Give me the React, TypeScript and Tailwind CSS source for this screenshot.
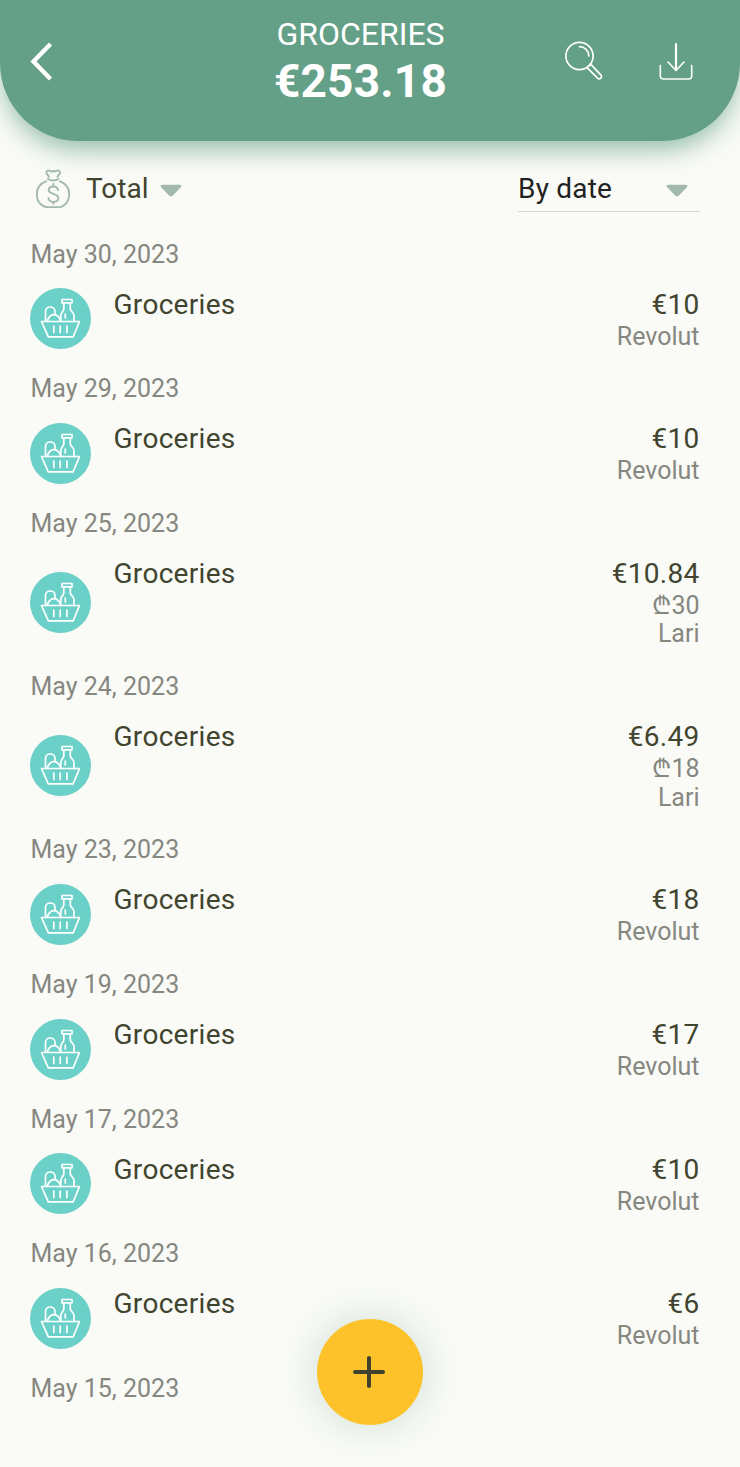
type Expense = {
  date: string;
  amount?: string;
  original?: string;
  account?: string;
};

const expenses: Expense[] = [
  { date: "May 30, 2023", amount: "€10", account: "Revolut" },
  { date: "May 29, 2023", amount: "€10", account: "Revolut" },
  { date: "May 25, 2023", amount: "€10.84", original: "₾30", account: "Lari" },
  { date: "May 24, 2023", amount: "€6.49", original: "₾18", account: "Lari" },
  { date: "May 23, 2023", amount: "€18", account: "Revolut" },
  { date: "May 19, 2023", amount: "€17", account: "Revolut" },
  { date: "May 17, 2023", amount: "€10", account: "Revolut" },
  { date: "May 16, 2023", amount: "€6", account: "Revolut" },
  { date: "May 15, 2023" },
];

const BackIcon = () => (
  <svg className="h-10 w-6" viewBox="0 0 24 40" fill="none" stroke="currentColor" strokeWidth="4.4">
    <path d="M20.5 3 3.5 20.5 20.5 38" />
  </svg>
);

const SearchIcon = () => (
  <svg className="size-10" viewBox="0 0 40 40" fill="none" stroke="currentColor" strokeWidth="1.7" strokeLinejoin="round" strokeLinecap="round">
    <circle cx="15.5" cy="15" r="13.6" />
    <path d="M15.5 5.7a9.3 9.3 0 0 1 9.3 9.3" />
    <path d="M23 26.7 33.6 37.1c1 1 2.2 1 3.2 0s1-2.200 0-3.200L26.600 23.100M23 26.700l3.600-3.600" />
  </svg>
);

const DownloadIcon = () => (
  <svg className="h-10 w-9" viewBox="0 0 36 40" fill="none" stroke="currentColor" strokeWidth="1.6" strokeLinecap="round" strokeLinejoin="round">
    <path d="M18 3v26" strokeWidth="2.2" />
    <path d="M10 21 18 29.500l8-8.500" />
    <path d="M2.300 24.500v10.500a3 3 0 0 0 3 3h25.400a3 3 0 0 0 3-3V24.500" />
  </svg>
);

const MoneyBagIcon = () => (
  <svg className="h-10 w-9 text-[#a3b9b0]" viewBox="0 0 36 40" fill="none" stroke="currentColor" strokeWidth="1.9" strokeLinecap="round" strokeLinejoin="round">
    <path d="M13.9 7.6 11.8 4.6c-1.3-2.200.9-4.100 3.100-2.700 1.200.8 2 .8 3.300 0 1.300.8 2.100.8 3.300 0 2.200-1.400 4.400.5 3.100 2.700l-2.100 3" />
    <path d="M12.900 9.800c3.200 2.100 7.400 2.100 10.600 0" />
    <path d="M11.3 12.200C5.500 14.500 1.800 19.300 1.800 25.200c0 5.200 2.700 9.800 6.600 12 1.200.7 2.200.9 3.600.9h12c1.400 0 2.400-.2 3.600-.9 3.900-2.200 6.600-6.800 6.600-12 0-5.900-3.700-10.700-9.500-13" />
    <path d="M23 21c-.4-2.300-2.200-3.500-4.600-3.500-2.700 0-4.700 1.400-4.700 3.600 0 5 9.600 2.700 9.600 8 0 2.300-2 3.800-4.900 3.800-2.700 0-4.700-1.400-5-3.900M18.400 14.700v2.800M18.400 32.900v1.800" />
  </svg>
);

const CaretIcon = () => (
  <svg className="h-3.5 w-[22px] text-[#a3b9b0]" viewBox="0 0 22 14" fill="currentColor">
    <path d="M2.200.7h17.600c1.600 0 2.200 1.500 1.100 2.500l-8.300 8.600c-.9.900-2.300.9-3.200 0L1.100 3.200C0 2.200.6.700 2.200.7Z" />
  </svg>
);

const BasketIcon = () => (
  <svg className="size-[61px]" viewBox="0 0 61 61" fill="none" stroke="currentColor" strokeWidth="1.7" strokeLinecap="round" strokeLinejoin="round">
    <path d="M11.5 33.5h38L43.2 48.800H18.300Z" />
    <path d="M23.8 38v6.500M30.200 38v6.500M36.900 38v6.500" />
    <path d="M15.500 33V23.500c0-6 9.500-6 9.500 0v2.700" />
    <path d="M17.500 33.300c0-3 3-6.600 6.500-6.600s6.500 3.600 6.500 6.600" />
    <path d="M32 11.500h10v3.300H32Z" />
    <path d="M33.800 15v6c0 2.300-3 3.200-3 6.500v6M40.300 15v6c0 2.300 3.700 3.200 3.700 6.500v6M35.300 26v4" />
  </svg>
);

const Header = () => (
  <header className="grid h-[141px] grid-cols-3 rounded-b-[78px] bg-[#649f87] px-[30px] text-white shadow-[0_12px_26px_-4px_rgba(100,159,135,0.7)]">
    <button className="flex h-[122px] items-center justify-start">
      <BackIcon />
    </button>
    <div className="flex flex-col items-center whitespace-nowrap pt-[14px] pr-[19px]">
      <h1 className="text-[32px] leading-[40px] font-normal">GROCERIES</h1>
      <p className="text-[46px] leading-[54px] font-bold tracking-[0.2px]">€253.18</p>
    </div>
    <div className="flex h-[122px] items-center justify-end gap-[54px] pr-4">
      <SearchIcon />
      <DownloadIcon />
    </div>
  </header>
);

const Filters = () => (
  <div className="flex h-[71px] items-end justify-between pr-10 pl-[35px] text-[28px] leading-[35px]">
    <button className="flex h-[47px] items-center">
      <MoneyBagIcon />
      <span className="ml-[15px]">Total</span>
      <span className="ml-[11px] pt-1">
        <CaretIcon />
      </span>
    </button>
    <button className="flex h-[47px] w-[182px] items-center justify-between border-b border-[#d4d7d2] pr-3 text-[#222]">
      <span className="tracking-[0.2px]">By date</span>
      <span className="pt-1.5">
        <CaretIcon />
      </span>
    </button>
  </div>
);

const ExpenseRow = ({ date, amount, original, account }: Expense) => (
  <li className="pb-[20.2px]">
    <p className="h-[50px] pl-[0.5px] leading-[35px]">{date}</p>
    {amount && (
      <div className="flex">
        <span className="flex size-[61px] shrink-0 self-center rounded-full bg-[#6bd0c8] text-white">
          <BasketIcon />
        </span>
        <span className="ml-[22.5px] flex-1 text-[28px] leading-[35px] tracking-[0.3px] text-[#41442f]">Groceries</span>
        <div className="text-right leading-[28.5px]">
          <p className="h-9 text-[28px] leading-[35px] tracking-[0.3px] text-[#41442f]">{amount}</p>
          {original && <p>{original}</p>}
          <p>{account}</p>
        </div>
      </div>
    )}
  </li>
);

export default function App() {
  return (
    <div className="relative h-[1467px] w-[740px] overflow-hidden bg-[#fafbf6] font-[Roboto,sans-serif] text-[#41442f]">
      <Header />
      <Filters />
      <ul className="pt-[24.5px] pr-[40.5px] pl-[30px] text-[25px] text-[#868781]">
        {expenses.map((expense) => (
          <ExpenseRow key={expense.date} {...expense} />
        ))}
      </ul>
      <button className="absolute bottom-[42px] left-[317px] flex size-[106px] items-center justify-center rounded-full bg-[#fdc22a] pr-0.5 text-[#3e412e] shadow-[0_0_40px_rgba(100,159,135,0.3)]">
        <svg className="size-9" viewBox="0 0 36 36" stroke="currentColor" strokeWidth="4" strokeLinecap="round">
          <path d="M4 18h28M18 4v28" />
        </svg>
      </button>
    </div>
  );
}
